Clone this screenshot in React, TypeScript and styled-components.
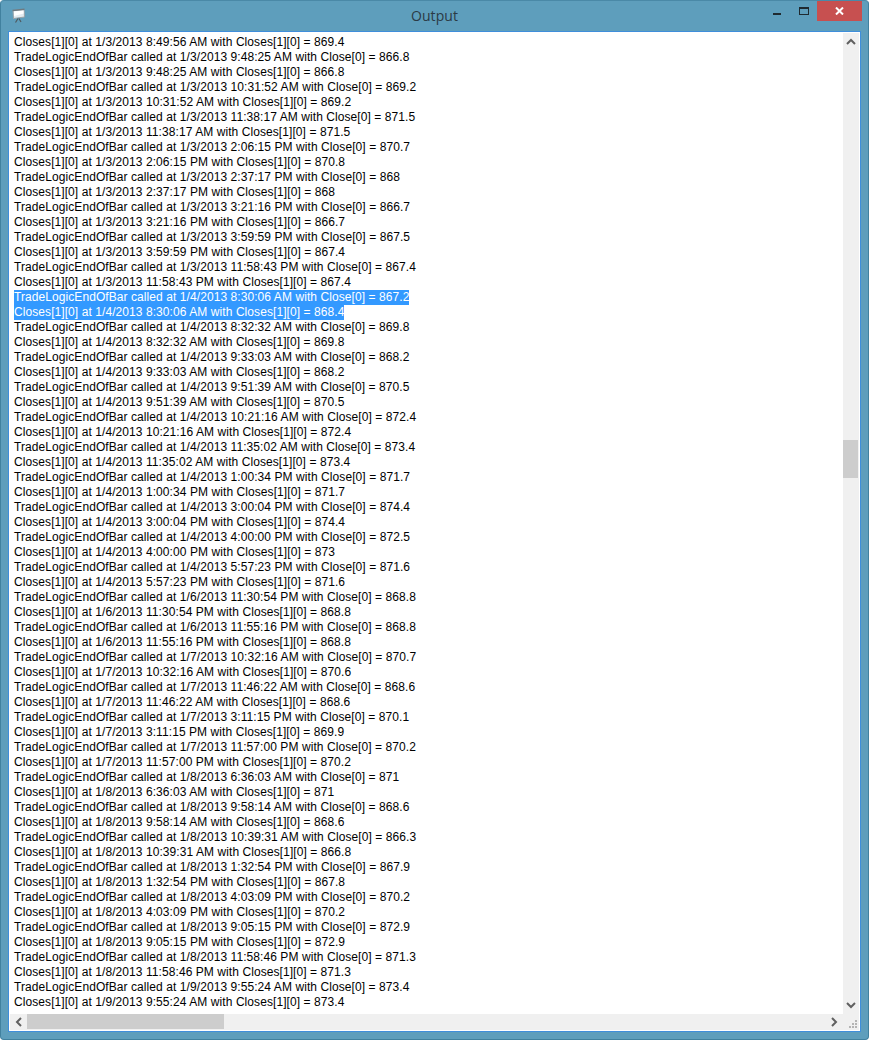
import React from "react";
import styled, { createGlobalStyle } from "styled-components";

type LogLine = {
  text: string;
  selected?: boolean;
};

// date, time, value on the Close line, value on the Closes line
const BARS: [string, string, string, string][] = [
  ["1/3/2013", "9:48:25 AM", "866.8", "866.8"],
  ["1/3/2013", "10:31:52 AM", "869.2", "869.2"],
  ["1/3/2013", "11:38:17 AM", "871.5", "871.5"],
  ["1/3/2013", "2:06:15 PM", "870.7", "870.8"],
  ["1/3/2013", "2:37:17 PM", "868", "868"],
  ["1/3/2013", "3:21:16 PM", "866.7", "866.7"],
  ["1/3/2013", "3:59:59 PM", "867.5", "867.4"],
  ["1/3/2013", "11:58:43 PM", "867.4", "867.4"],
  ["1/4/2013", "8:30:06 AM", "867.2", "868.4"],
  ["1/4/2013", "8:32:32 AM", "869.8", "869.8"],
  ["1/4/2013", "9:33:03 AM", "868.2", "868.2"],
  ["1/4/2013", "9:51:39 AM", "870.5", "870.5"],
  ["1/4/2013", "10:21:16 AM", "872.4", "872.4"],
  ["1/4/2013", "11:35:02 AM", "873.4", "873.4"],
  ["1/4/2013", "1:00:34 PM", "871.7", "871.7"],
  ["1/4/2013", "3:00:04 PM", "874.4", "874.4"],
  ["1/4/2013", "4:00:00 PM", "872.5", "873"],
  ["1/4/2013", "5:57:23 PM", "871.6", "871.6"],
  ["1/6/2013", "11:30:54 PM", "868.8", "868.8"],
  ["1/6/2013", "11:55:16 PM", "868.8", "868.8"],
  ["1/7/2013", "10:32:16 AM", "870.7", "870.6"],
  ["1/7/2013", "11:46:22 AM", "868.6", "868.6"],
  ["1/7/2013", "3:11:15 PM", "870.1", "869.9"],
  ["1/7/2013", "11:57:00 PM", "870.2", "870.2"],
  ["1/8/2013", "6:36:03 AM", "871", "871"],
  ["1/8/2013", "9:58:14 AM", "868.6", "868.6"],
  ["1/8/2013", "10:39:31 AM", "866.3", "866.8"],
  ["1/8/2013", "1:32:54 PM", "867.9", "867.8"],
  ["1/8/2013", "4:03:09 PM", "870.2", "870.2"],
  ["1/8/2013", "9:05:15 PM", "872.9", "872.9"],
  ["1/8/2013", "11:58:46 PM", "871.3", "871.3"],
  ["1/9/2013", "9:55:24 AM", "873.4", "873.4"],
];

const LINES: LogLine[] = [
  { text: "Closes[1][0] at 1/3/2013 8:49:56 AM with Closes[1][0] = 869.4" },
  ...BARS.flatMap(([date, time, close, closes]) => {
    const selected = date === "1/4/2013" && time === "8:30:06 AM";
    return [
      {
        text: `TradeLogicEndOfBar called at ${date} ${time} with Close[0] = ${close}`,
        selected,
      },
      {
        text: `Closes[1][0] at ${date} ${time} with Closes[1][0] = ${closes}`,
        selected,
      },
    ];
  }),
];

export default function App() {
  return (
    <>
      <GlobalStyle />
      <Window>
        <TitleBar>
          <AppIcon viewBox="0 0 16 16">
            <path d="M3 2.5l11-1 .5 7.5-11 1.5z" fill="#e4ecf1" stroke="#9aa3a8" strokeWidth="1" />
            <path d="M4 3.5l9.5-1 .2 3L4 8z" fill="#ffffff" />
            <path d="M2.5 2.5l12-1.2" stroke="#6f7a80" strokeWidth="1.4" />
            <path d="M8 10.5l-2.5 4M9 10.5l2 3.5" stroke="#4f5a60" strokeWidth="1.2" />
          </AppIcon>
          <Title>Output</Title>
          <WindowButtons>
            <MinimizeButton>
              <MinimizeGlyph />
            </MinimizeButton>
            <MaximizeButton>
              <MaximizeGlyph />
            </MaximizeButton>
            <CloseButton>
              <svg width="9" height="8" viewBox="0 0 9 8">
                <path d="M1 0.5l7 7M8 0.5l-7 7" stroke="#fff" strokeWidth="2" fill="none" />
              </svg>
            </CloseButton>
          </WindowButtons>
        </TitleBar>
        <Client>
          <ListArea>
            <LogList>
              {LINES.map((line, index) => (
                <LogRow key={index}>
                  <LogText $selected={line.selected}>{line.text}</LogText>
                </LogRow>
              ))}
            </LogList>
            <VerticalBar>
              <ArrowButton>
                <svg width="10" height="7" viewBox="0 0 10 7">
                  <path d="M1 6l4-4 4 4" stroke="#606060" strokeWidth="2" fill="none" />
                </svg>
              </ArrowButton>
              <VerticalTrack>
                <VerticalThumb />
              </VerticalTrack>
              <ArrowButton>
                <svg width="10" height="7" viewBox="0 0 10 7">
                  <path d="M1 1l4 4 4-4" stroke="#606060" strokeWidth="2" fill="none" />
                </svg>
              </ArrowButton>
            </VerticalBar>
          </ListArea>
          <HorizontalBar>
            <SideButton>
              <svg width="7" height="10" viewBox="0 0 7 10">
                <path d="M6 1L2 5l4 4" stroke="#606060" strokeWidth="2" fill="none" />
              </svg>
            </SideButton>
            <HorizontalTrack>
              <HorizontalThumb />
            </HorizontalTrack>
            <SideButton>
              <svg width="7" height="10" viewBox="0 0 7 10">
                <path d="M1 1l4 4-4 4" stroke="#606060" strokeWidth="2" fill="none" />
              </svg>
            </SideButton>
            <Grip>
              <svg width="8" height="8" viewBox="0 0 8 8">
                <path
                  d="M6 0h2v2H6zM3 3h2v2H3zM6 3h2v2H6zM0 6h2v2H0zM3 6h2v2H3zM6 6h2v2H6z"
                  fill="#b4b4b4"
                />
              </svg>
            </Grip>
          </HorizontalBar>
        </Client>
      </Window>
    </>
  );
}

const GlobalStyle = createGlobalStyle`
  html, body {
    margin: 0;
    padding: 0;
    background: #ffffff;
  }
`;

const Window = styled.div`
  width: 869px;
  height: 1040px;
  box-sizing: border-box;
  display: flex;
  flex-direction: column;
  padding: 0 7px 7px 7px;
  background: #5e9ebc;
  border: 1px solid #41819f;
  border-top-color: #4a89a7;
  border-radius: 4px;
  overflow: hidden;
`;

const TitleBar = styled.div`
  position: relative;
  height: 30px;
  flex: none;
  display: flex;
  align-items: center;
  padding-left: 2px;
`;

const AppIcon = styled.svg`
  width: 16px;
  height: 16px;
  flex: none;
`;

const Title = styled.div`
  flex: 1;
  text-align: center;
  font-family: "Open Sans", "Liberation Sans", sans-serif;
  font-size: 14px;
  letter-spacing: 0.1px;
  color: #2b3a45;
  padding-right: 18px;
  margin-bottom: 2px;
`;

const WindowButtons = styled.div`
  position: absolute;
  top: 0;
  right: -1px;
  display: flex;
  align-items: flex-start;
`;

const MinimizeButton = styled.div`
  width: 26px;
  height: 20px;
  display: flex;
  align-items: flex-end;
  justify-content: center;
  padding-bottom: 6px;
  box-sizing: border-box;
  margin-right: 1px;
`;

const MinimizeGlyph = styled.div`
  width: 8px;
  height: 2px;
  background: #1f2a30;
`;

const MaximizeButton = styled.div`
  width: 26px;
  height: 20px;
  display: flex;
  align-items: flex-start;
  justify-content: center;
  padding-top: 6px;
  box-sizing: border-box;
`;

const MaximizeGlyph = styled.div`
  width: 10px;
  height: 8px;
  box-sizing: border-box;
  border: 1px solid #1f2a30;
  border-top-width: 2px;
`;

const CloseButton = styled.div`
  width: 45px;
  height: 20px;
  background: #c75050;
  display: flex;
  align-items: center;
  justify-content: center;
`;

const Client = styled.div`
  flex: 1;
  min-height: 0;
  display: flex;
  flex-direction: column;
  background: #ffffff;
  border: 1px solid #3f8edb;
  padding: 1px;
`;

const ListArea = styled.div`
  flex: 1;
  min-height: 0;
  display: flex;
`;

const LogList = styled.div`
  flex: 1;
  min-width: 0;
  overflow: hidden;
  padding: 2px 0 0 4px;
`;

const LogRow = styled.div`
  height: 15px;
  display: flex;
  white-space: nowrap;
`;

const LogText = styled.span<{ $selected?: boolean }>`
  font-family: "Liberation Sans", Arial, sans-serif;
  font-size: 12px;
  line-height: 15px;
  letter-spacing: 0.075px;
  height: 15px;
  color: ${(props) => (props.$selected ? "#ffffff" : "#000000")};
  background: ${(props) => (props.$selected ? "#3399ff" : "transparent")};
`;

const VerticalBar = styled.div`
  width: 16px;
  flex: none;
  display: flex;
  flex-direction: column;
  background: #f0f0f0;
`;

const ArrowButton = styled.div`
  height: 17px;
  flex: none;
  display: flex;
  align-items: center;
  justify-content: center;
`;

const VerticalTrack = styled.div`
  flex: 1;
  display: flex;
  flex-direction: column;
  padding-top: 390px;
`;

const VerticalThumb = styled.div`
  height: 38px;
  width: 15px;
  background: #cdcdcd;
`;

const HorizontalBar = styled.div`
  height: 16px;
  flex: none;
  display: flex;
  background: #f0f0f0;
`;

const SideButton = styled.div`
  width: 17px;
  flex: none;
  display: flex;
  align-items: center;
  justify-content: center;
`;

const HorizontalTrack = styled.div`
  flex: 1;
  display: flex;
`;

const HorizontalThumb = styled.div`
  width: 197px;
  height: 15px;
  background: #cdcdcd;
`;

const Grip = styled.div`
  width: 16px;
  flex: none;
  display: flex;
  align-items: flex-end;
  justify-content: flex-end;
  padding: 0 2px 2px 0;
  box-sizing: border-box;
`;
